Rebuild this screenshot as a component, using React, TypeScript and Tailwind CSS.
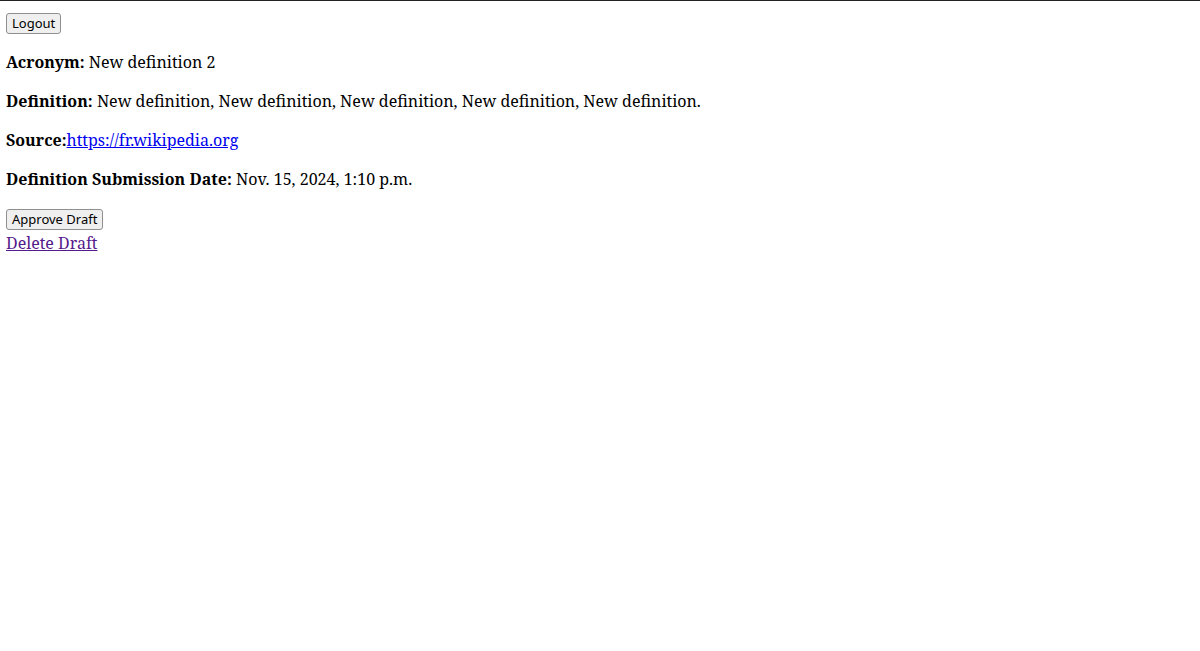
export default function App() {
  return (
    <div className="min-h-screen bg-white border-t border-[#222] px-[6px] pt-[10px] font-['Noto_Serif',serif] text-[16px] leading-[23px] text-black">
      <button className="font-['Noto_Sans',sans-serif] text-[13px] leading-[17px] px-[5px] py-[1px] bg-[#efefef] border border-[#8f8f8f] rounded-[3px]">
        Logout
      </button>

      <p className="mt-[17px]">
        <strong>Acronym:</strong> New definition 2
      </p>
      <p className="mt-[16px]">
        <strong>Definition:</strong> New definition, New definition, New definition, New definition, New definition.
      </p>
      <p className="mt-[16px]">
        <strong>Source:</strong>
        <a href="#" className="text-[#0000ee] underline">https://fr.wikipedia.org</a>
      </p>
      <p className="mt-[16px]">
        <strong>Definition Submission Date:</strong> Nov. 15, 2024, 1:10 p.m.
      </p>

      <form className="mt-[16px]">
        <button type="button" className="font-['Noto_Sans',sans-serif] text-[13px] leading-[17px] px-[5px] py-[1px] bg-[#efefef] border border-[#8f8f8f] rounded-[3px]">
          Approve Draft
        </button>
      </form>
      <div className="mt-[2px]">
        <a href="#" className="text-[#551a8b] underline">Delete Draft</a>
      </div>
    </div>
  );
}
